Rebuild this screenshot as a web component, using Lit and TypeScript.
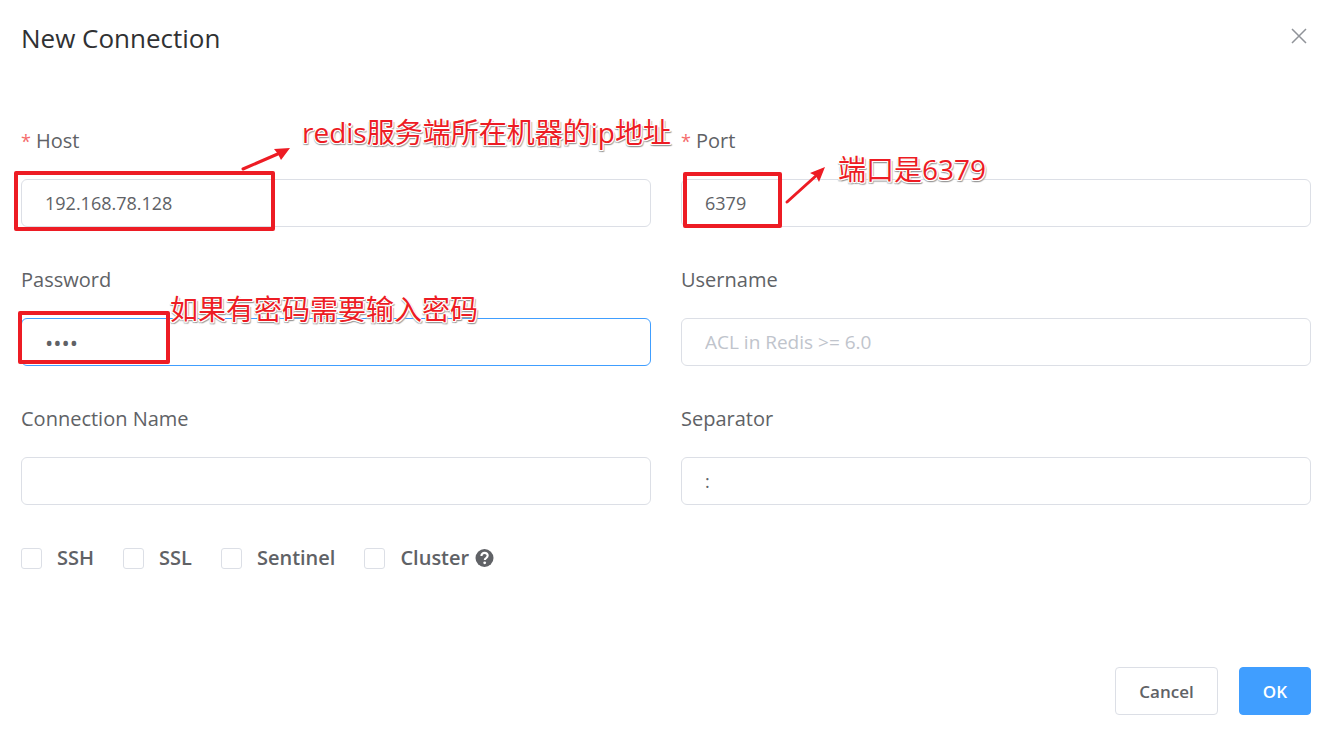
import { LitElement, html, css, nothing } from "lit";
import { customElement, property } from "lit/decorators.js";

@customElement("form-field")
class FormField extends LitElement {
  @property() label = "";
  @property() type = "text";
  @property() value = "";
  @property() placeholder = "";
  @property({ type: Boolean }) required = false;
  @property({ type: Boolean }) active = false;

  static styles = css`
    :host {
      display: block;
      position: relative;
      min-width: 0;
    }
    .label {
      display: block;
      font-size: 20px;
      line-height: 40px;
      margin-bottom: 18px;
      color: #606266;
    }
    .star {
      color: #f56c6c;
      font-size: 18px;
      margin-right: 5px;
    }
    .input {
      display: block;
      box-sizing: border-box;
      width: 100%;
      height: 48px;
      padding: 0 23px;
      border: 1px solid #dcdfe6;
      border-radius: 6px;
      background: #fff;
      color: #606266;
      font-family: inherit;
      font-size: 18px;
      outline: none;
    }
    .input[type="password"] {
      font-size: 22px;
    }
    .input::placeholder {
      color: #c0c4cc;
      font-size: 19px;
      opacity: 1;
    }
    .input.active,
    .input:focus {
      border-color: #409eff;
    }
  `;

  render() {
    return html`
      <label class="label" for="control"
        >${this.required ? html`<span class="star">*</span>` : nothing}${this.label}</label
      >
      <input
        id="control"
        class="input ${this.active ? "active" : ""}"
        type=${this.type}
        .value=${this.value}
        placeholder=${this.placeholder}
        ?required=${this.required}
      />
      <slot></slot>
    `;
  }
}

@customElement("app-root")
class AppRoot extends LitElement {
  static styles = css`
    :host {
      display: block;
      font-family: "Open Sans", "Noto Sans", "Noto Sans CJK SC", sans-serif;
      color: #606266;
      background: #fff;
    }
    .dialog {
      box-sizing: border-box;
      min-height: 100vh;
      display: flex;
      flex-direction: column;
      padding: 18px 16px 26px 21px;
    }
    .header {
      display: flex;
      justify-content: space-between;
      align-items: flex-start;
      margin-bottom: 63px;
    }
    .title {
      margin: 0;
      font-size: 26px;
      font-weight: 400;
      line-height: 40px;
      color: #303133;
    }
    .close {
      width: 24px;
      height: 36px;
      padding: 0;
      border: 0;
      background: none;
      color: #909399;
      cursor: pointer;
      display: flex;
      align-items: center;
      justify-content: center;
    }
    .fields {
      display: grid;
      grid-template-columns: 1fr 1fr;
      column-gap: 30px;
      row-gap: 33px;
    }
    .options {
      display: flex;
      flex-wrap: wrap;
      align-items: center;
      gap: 29px;
      margin-top: 33px;
    }
    .option {
      display: flex;
      align-items: center;
      font-size: 20px;
      line-height: 40px;
      font-weight: 600;
    }
    .box {
      appearance: none;
      box-sizing: border-box;
      width: 21px;
      height: 21px;
      margin: 0 15px 0 0;
      border: 1px solid #dcdfe6;
      border-radius: 3px;
      background: #fff;
    }
    .box:checked {
      background: #409eff;
      border-color: #409eff;
    }
    .help {
      margin-left: 6px;
    }
    .footer {
      display: flex;
      justify-content: flex-end;
      gap: 21px;
      margin-top: auto;
    }
    .button {
      height: 48px;
      padding: 0 23px;
      border: 1px solid #dcdfe6;
      border-radius: 4px;
      background: #fff;
      color: #606266;
      font-family: inherit;
      font-size: 17px;
      font-weight: 600;
      cursor: pointer;
    }
    .primary {
      background: #409eff;
      border-color: #409eff;
      color: #fff;
    }
    .frame {
      position: absolute;
      box-sizing: border-box;
      border: 4px solid #ed1c24;
      border-radius: 2px;
      pointer-events: none;
    }
    .host-frame {
      left: -7px;
      top: 50px;
      width: 261px;
      height: 60px;
    }
    .port-frame {
      left: 2px;
      top: 51px;
      width: 99px;
      height: 56px;
    }
    .password-frame {
      left: -3px;
      top: 51px;
      width: 152px;
      height: 53px;
    }
    .arrow {
      position: absolute;
      pointer-events: none;
      fill: #ed1c24;
      stroke: #ed1c24;
    }
    .host-arrow {
      left: 219px;
      top: 24px;
    }
    .port-arrow {
      left: 103px;
      top: 44px;
    }
    .note {
      position: absolute;
      z-index: 1;
      white-space: nowrap;
      font-size: 28px;
      line-height: 40px;
      color: #ed1c24;
      pointer-events: none;
      text-shadow: -1px 0 0 #fff, 1px 0 0 #fff, 0 -1px 0 #fff, 0 1px 0 #fff,
        1px 1px 0 #fff, -1px 1px 0 #fff, 1px 2px 1px #999, -1px 2px 1px #aaa,
        2px 2px 1px #bbb;
    }
    .host-note {
      left: 281px;
      top: -9px;
    }
    .port-note {
      left: 157px;
      top: 28px;
    }
    .password-note {
      left: 149px;
      top: 29px;
    }
  `;

  render() {
    return html`
      <form class="dialog" @submit=${(e: Event) => e.preventDefault()}>
        <header class="header">
          <h1 class="title">New Connection</h1>
          <button class="close" type="button" aria-label="Close">
            <svg width="16" height="16" viewBox="0 0 16 16">
              <path d="M1 1 15 15M15 1 1 15" stroke="currentColor" stroke-width="1.5" />
            </svg>
          </button>
        </header>

        <div class="fields">
          <form-field label="Host" value="192.168.78.128" required>
            <span class="frame host-frame"></span>
            <svg class="arrow host-arrow" width="54" height="28" viewBox="0 0 54 28">
              <path d="M3 24 40 8" fill="none" stroke-width="3" stroke-linecap="round" />
              <path d="M50 3 34 4 38 9 41 15Z" stroke="none" />
            </svg>
            <span class="note host-note">redis服务端所在机器的ip地址</span>
          </form-field>
          <form-field label="Port" value="6379" required>
            <span class="frame port-frame"></span>
            <svg class="arrow port-arrow" width="44" height="42" viewBox="0 0 44 42">
              <path d="M3 37 34 9" fill="none" stroke-width="3" stroke-linecap="round" />
              <path d="M41 2 26 8 32 11 35 17Z" stroke="none" />
            </svg>
            <span class="note port-note">端口是6379</span>
          </form-field>
          <form-field label="Password" type="password" value="1234" active>
            <span class="frame password-frame"></span>
            <span class="note password-note">如果有密码需要输入密码</span>
          </form-field>
          <form-field label="Username" placeholder="ACL in Redis >= 6.0"></form-field>
          <form-field label="Connection Name"></form-field>
          <form-field label="Separator" value=":"></form-field>
        </div>

        <div class="options">
          ${["SSH", "SSL", "Sentinel", "Cluster"].map(
            (name) => html`
              <label class="option">
                <input class="box" type="checkbox" name=${name} />${name}${name === "Cluster"
                  ? html`<svg class="help" width="19" height="19" viewBox="0 0 19 19">
                      <circle cx="9.5" cy="9" r="9" fill="#606266" />
                      <path
                        d="M6.4 7C6.4 5 7.7 3.9 9.6 3.9s3.1 1.1 3.1 2.7c0 1.2-.6 1.8-1.6 2.5-.9.6-1.3 1-1.3 2"
                        fill="none"
                        stroke="#fff"
                        stroke-width="2.1"
                      />
                      <circle cx="9.7" cy="13.8" r="1.4" fill="#fff" />
                    </svg>`
                  : nothing}
              </label>
            `
          )}
        </div>

        <footer class="footer">
          <button class="button" type="button">Cancel</button>
          <button class="button primary" type="submit">OK</button>
        </footer>
      </form>
    `;
  }
}
